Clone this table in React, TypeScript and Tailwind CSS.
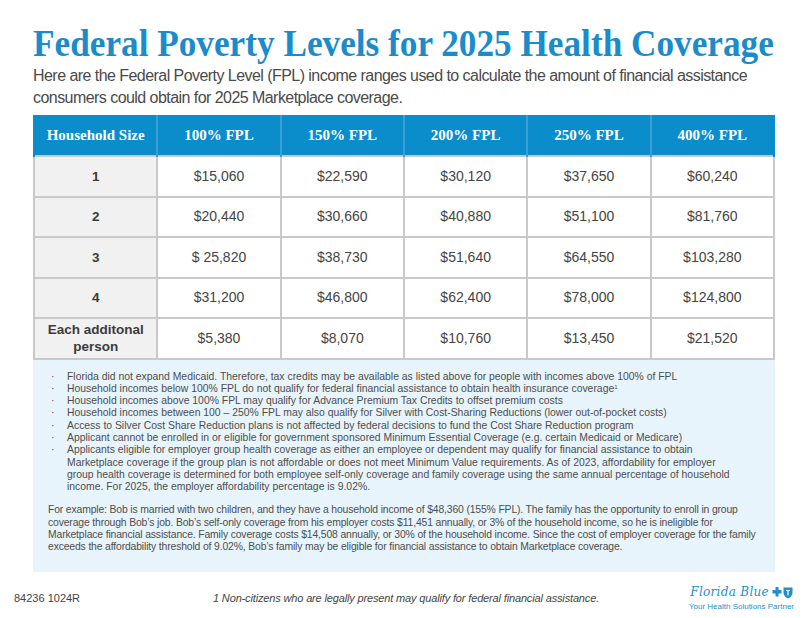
const headers = ['Household Size', '100% FPL', '150% FPL', '200% FPL', '250% FPL', '400% FPL']

const rows: { size: string; values: string[] }[] = [
  { size: '1', values: ['$15,060', '$22,590', '$30,120', '$37,650', '$60,240'] },
  { size: '2', values: ['$20,440', '$30,660', '$40,880', '$51,100', '$81,760'] },
  { size: '3', values: ['$ 25,820', '$38,730', '$51,640', '$64,550', '$103,280'] },
  { size: '4', values: ['$31,200', '$46,800', '$62,400', '$78,000', '$124,800'] },
  { size: 'Each additonal person', values: ['$5,380', '$8,070', '$10,760', '$13,450', '$21,520'] },
]

// each bullet is a list of lines, broken the way the printed sheet breaks them
const bullets: string[][] = [
  ['Florida did not expand Medicaid. Therefore, tax credits may be available as listed above for people with incomes above 100% of FPL'],
  ['Household incomes below 100% FPL do not qualify for federal financial assistance to obtain health insurance coverage'],
  ['Household incomes above 100% FPL may qualify for Advance Premium Tax Credits to offset premium costs'],
  ['Household incomes between 100 – 250% FPL may also qualify for Silver with Cost-Sharing Reductions (lower out-of-pocket costs)'],
  ['Access to Silver Cost Share Reduction plans is not affected by federal decisions to fund the Cost Share Reduction program'],
  ['Applicant cannot be enrolled in or eligible for government sponsored Minimum Essential Coverage (e.g. certain Medicaid or Medicare)'],
  [
    'Applicants eligible for employer group health coverage as either an employee or dependent may qualify for financial assistance to obtain',
    'Marketplace coverage if the group plan is not affordable or does not meet Minimum Value requirements.  As of 2023, affordability for employer',
    'group health coverage is determined for both employee self-only coverage and family coverage using the same annual percentage of household',
    'income. For 2025, the employer affordability percentage is 9.02%.',
  ],
]

const example = [
  'For example: Bob is married with two children, and they have a household income of $48,360 (155% FPL). The family has the opportunity to enroll in group',
  'coverage through Bob’s job.  Bob’s self-only coverage from his employer costs $11,451 annually, or 3% of the household income, so he is ineligible for',
  'Marketplace financial assistance.  Family coverage costs $14,508 annually, or 30% of the household income. Since the cost of employer coverage for the family',
  'exceeds the affordability threshold of 9.02%, Bob’s family may be eligible for financial assistance to obtain Marketplace coverage.',
]

const serif = "font-['Liberation_Serif',serif]"
const sans = "font-['Liberation_Sans',Arial,sans-serif]"

function Logo() {
  return (
    <div className="flex flex-col items-end pr-[8px]">
      <div className="flex items-center gap-[3px]">
        <span className="font-['DejaVu_Serif',serif] text-[12px] italic leading-none text-[#1f8fce] tracking-[0.3px]">
          Florida Blue
        </span>
        <svg width="22" height="13" viewBox="0 0 22 13">
          <path d="M3.5 1h3v3h3v3.5h-3v3h-3v-3h-3V4h3z" fill="#1f8fce" />
          <path d="M11.5 1.5h9v5c0 3-2 5-4.5 6-2.5-1-4.5-3-4.5-6z" fill="#1f8fce" />
          <path d="M14 4.5h4M16 4.5v5" stroke="#fff" strokeWidth="1.2" />
        </svg>
      </div>
      <span className={`${sans} text-[8px] text-[#1f8fce] mt-[4px] leading-none`}>Your Health Solutions Partner</span>
    </div>
  )
}

export default function App() {
  return (
    <div className={`w-[808px] h-[618px] bg-white overflow-hidden ${sans}`}>
      <div className="px-[33px] pt-[22px]">
        <h1
          className={`${serif} font-bold text-[#1a8ccb] text-[38px] leading-[42px] whitespace-nowrap origin-left scale-x-[0.927]`}
        >
          Federal Poverty Levels for 2025 Health Coverage
        </h1>
        <p className="mt-[1px] text-[16px] leading-[22px] text-[#4a4a4a] tracking-[-0.55px] w-[740px]">
          Here are the Federal Poverty Level (FPL) income ranges used to calculate the amount of financial assistance
          <br />
          consumers could obtain for 2025 Marketplace coverage.
        </p>

        <table className="mt-[6px] w-[742px] border-collapse table-fixed">
          <thead>
            <tr className="bg-[#0b8dcc] h-[41px]">
              {headers.map((h) => (
                <th
                  key={h}
                  className={`${serif} font-bold text-white text-[15px] border-x-2 border-[#3a9fd6] first:border-l-[#0b8dcc] last:border-r-[#0b8dcc]`}
                >
                  {h}
                </th>
              ))}
            </tr>
          </thead>
          <tbody>
            {rows.map((r) => (
              <tr key={r.size} className="h-[40.5px]">
                <td className="border-2 border-[#c9c9c9] bg-[#f1f1f1] text-center text-[13.5px] leading-[17px] font-bold text-[#3b3b3b] px-1">
                  {r.size}
                </td>
                {r.values.map((v, i) => (
                  <td key={i} className="border-2 border-[#c9c9c9] text-center text-[14px] text-[#444]">
                    {v}
                  </td>
                ))}
              </tr>
            ))}
          </tbody>
        </table>

        <div className="w-[742px] h-[212px] bg-[#e8f4fb] pl-[15px] pr-2 pt-[11px] text-[10.4px] leading-[12.3px] text-[#4d4d4d] whitespace-nowrap">
          <ul>
            {bullets.map((lines, i) => (
              <li key={i} className="flex">
                <span className="w-[19px] shrink-0 pl-[3px]">·</span>
                <span>
                  {lines.map((l, j) => (
                    <span key={j} className="block">
                      {l}
                      {i === 1 && <sup className="text-[6px]">1</sup>}
                    </span>
                  ))}
                </span>
              </li>
            ))}
          </ul>
          <p className="mt-[11px] tracking-[-0.15px]">
            {example.map((l, i) => (
              <span key={i} className="block">
                {l}
              </span>
            ))}
          </p>
        </div>
      </div>

      <div className="flex items-center pl-[14px] pr-[6px] mt-[14px]">
        <span className="text-[11px] text-[#444] w-[199px]">84236 1024R</span>
        <span className="text-[11px] italic text-[#444] flex-1 tracking-[-0.15px]">
          1 Non-citizens who are legally present may qualify for federal financial assistance.
        </span>
        <Logo />
      </div>
    </div>
  )
}
